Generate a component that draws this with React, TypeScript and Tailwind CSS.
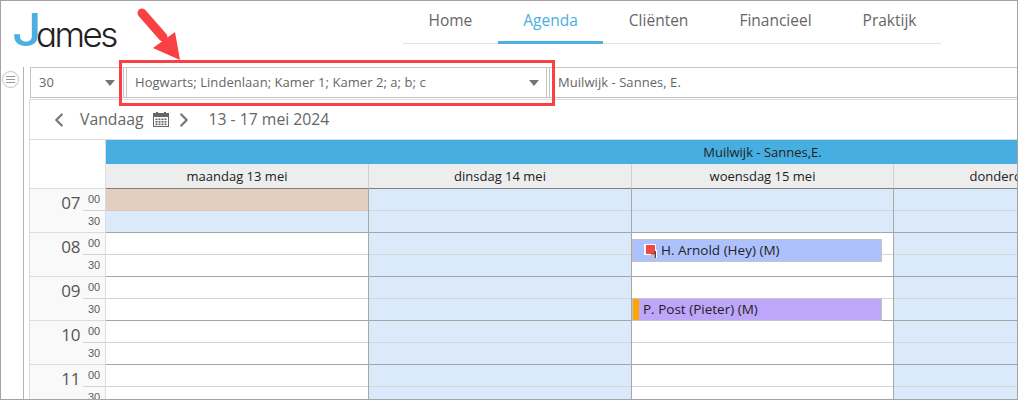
import { ChevronLeft, ChevronRight } from "lucide-react"

const navItems = ["Home", "Agenda", "Cliënten", "Financieel", "Praktijk"]

const blueDay = Array(10).fill("blue")

const days = [
  { label: "maandag 13 mei", width: "w-[263px]", slots: ["tan", "blue", "", "", "", "", "", "", "", ""] },
  { label: "dinsdag 14 mei", width: "w-[263px]", slots: blueDay },
  { label: "woensdag 15 mei", width: "w-[262px]", slots: ["blue", "blue", "", "", "", "", "", "", "", ""] },
  { label: "donderdag 16 mei", width: "w-[263px]", slots: blueDay },
]

const hours = ["07", "08", "09", "10", "11"]

function CalendarIcon() {
  return (
    <svg width="16" height="15" viewBox="0 0 16 15" className="ml-[9px] shrink-0">
      <rect x="0.5" y="1.5" width="15" height="13" fill="#fff" stroke="#666" />
      <rect x="1" y="2" width="14" height="3" fill="#666" />
      <rect x="3" y="0" width="2" height="3" fill="#666" />
      <rect x="11" y="0" width="2" height="3" fill="#666" />
      {[2.5, 5.5, 8.5, 11.5].map((x) =>
        [6.5, 9, 11.5].map((y) => <rect key={`${x}-${y}`} x={x} y={y} width="2" height="1.6" fill="#666" />)
      )}
    </svg>
  )
}

function Caret() {
  return <span className="ml-auto w-0 h-0 border-x-[5px] border-x-transparent border-t-[6px] border-t-[#757575]" />
}

function Flag() {
  return (
    <svg width="13" height="14" viewBox="0 0 13 14" className="shrink-0">
      <rect x="0" y="0" width="12" height="11" fill="#fff" />
      <rect x="10" y="6" width="3" height="8" fill="#fff" />
      <rect x="2" y="1" width="9" height="9" fill="#f0484a" />
      <rect x="10.5" y="7" width="1.5" height="7" fill="#7a3b2a" />
      <rect x="7" y="9.5" width="4" height="1" fill="#7a3b2a" />
    </svg>
  )
}

export default function App() {
  return (
    <div className="relative w-[1018px] h-[400px] overflow-hidden bg-white border border-[#a3a3a3] flex flex-col text-[#666] font-['Open_Sans',sans-serif]">
      <header className="h-[66px] shrink-0 flex">
        <div className="w-[402px] shrink-0 pl-[15px] pt-[6px] flex items-start leading-none">
          <span className="text-[#4bb0e0] text-[45px] font-['Inter',sans-serif] font-medium leading-[45px] scale-x-[1.15] origin-right">J</span>
          <span className="text-[#222] text-[35px] font-['Inter',sans-serif] font-light tracking-[-2.5px] leading-[35px] mt-[10px] -ml-[6px] [font-feature-settings:'cv11']">ames</span>
        </div>
        <nav className="w-[538px] h-[43px] flex border-b border-[#e3e3e3]">
          {navItems.map((item) => (
            <div
              key={item}
              className={
                item === "Agenda"
                  ? "h-[43px] px-[25.5px] pt-[8px] text-[15.5px] text-[#4bafdf] border-b-[3px] border-[#4bafdf]"
                  : "h-[43px] px-[25.5px] pt-[8px] text-[15.5px]"
              }
            >
              {item}
            </div>
          ))}
        </nav>
      </header>

      <div className="flex-1 flex min-h-0">
        <aside className="w-[23px] shrink-0 border-r border-[#b4b4b4] pt-[4px] pl-[1px]">
          <div className="w-[17px] h-[17px] rounded-full border border-[#c4c4c4] flex flex-col items-center justify-center gap-[2px]">
            <span className="w-[9px] h-px bg-[#999]" />
            <span className="w-[9px] h-px bg-[#999]" />
            <span className="w-[9px] h-px bg-[#999]" />
          </div>
        </aside>

        <main className="flex-1 min-w-0 pl-[5px]">
          <div className="h-[31px] ml-[1px] flex text-[13px] tracking-[0.05px] border-y border-[#c4c4c4]">
            <div className="w-[94px] shrink-0 border-x border-[#c4c4c4] flex items-center pl-[8px] pr-[8px]">
              30
              <Caret />
            </div>
            <div className="w-[421px] shrink-0 ml-[2px] border-x border-[#c4c4c4] flex items-center pl-[8px] pr-[7px]">
              Hogwarts; Lindenlaan; Kamer 1; Kamer 2; a; b; c
              <Caret />
            </div>
            <div className="flex-1 ml-[2px] border-l border-[#c4c4c4] flex items-center pl-[8px]">Muilwijk - Sannes, E.</div>
          </div>

          <div className="mt-[1px] border-l border-t border-[#dcdcdc]">
            <div className="h-[39px] flex items-center pl-[18px] text-[15.75px]">
              <ChevronLeft size={22} strokeWidth={2.5} className="text-[#777] shrink-0" />
              <span className="ml-[10px]">Vandaag</span>
              <CalendarIcon />
              <ChevronRight size={22} strokeWidth={2.5} className="text-[#777] ml-[4px] shrink-0" />
              <span className="ml-[14px]">13 - 17 mei 2024</span>
            </div>

            <div className="flex border-t border-[#dcdcdc]">
              <div className="w-[76px] shrink-0 border-r border-[#dcdcdc]">
                <div className="h-[49px] border-b border-[#dcdcdc]" />
                {hours.map((h) => (
                  <div key={h} className="h-[44px] flex bg-[#f9f9f9] border-b border-[#dcdcdc]">
                    <div className="w-[53px] text-right pr-[3px] pt-[2px] text-[17px] tracking-[-0.4px] leading-[24px] text-[#555]">{h}</div>
                    <div className="flex-1 text-[11px] text-[#5f5a55] font-['Liberation_Sans',sans-serif]">
                      <div className="h-[22px] border-b border-[#d4d4d4] pl-[5px] pt-[3px] leading-[14px]">00</div>
                      <div className="h-[21px] pl-[5px] pt-[3px] leading-[14px]">30</div>
                    </div>
                  </div>
                ))}
              </div>

              <div className="flex-1 min-w-0 flex flex-col">
                <div className="h-[24px] w-[1313px] shrink-0 bg-[#46aee0] text-[#222] text-[13px] leading-[24px] text-center">
                  Muilwijk - Sannes,E.
                </div>
                <div className="flex w-[1313px]">
                  {days.map((day, i) => (
                    <div key={day.label} className={`${day.width} shrink-0 relative border-r border-[#a8a8a8]`}>
                      <div className="h-[25px] bg-[#ededed] border-b border-[#7f7f7f] text-[#222] text-[13px] leading-[24px] text-center -mr-px border-r border-r-[#d0d0d0]">
                        {day.label}
                      </div>
                      {day.slots.map((slot, s) => (
                        <div
                          key={s}
                          className={[
                            "h-[22px]",
                            s % 2 === 1 ? "border-b border-[#a5a5a5]" : "border-b border-[#d4d4d4]",
                            slot === "tan" ? "bg-[#e2cfc0] border-[#e3c4ad]" : slot === "blue" ? "bg-[#dbeafa]" : "bg-white",
                          ].join(" ")}
                        />
                      ))}
                      {i === 2 && (
                        <>
                          <div className="absolute left-0 top-[75px] w-[250px] h-[23px] bg-[#adc2fc] border border-[#c4c4c4] flex items-center pl-[11px] gap-[4px] text-[13.5px] text-[#222]">
                            <Flag />
                            H. Arnold (Hey) (M)
                          </div>
                          <div className="absolute left-0 top-[134px] w-[250px] h-[23px] bg-[#bea6fb] border border-[#c4c4c4] flex items-center text-[13.5px] text-[#222]">
                            <span className="w-[6px] h-full bg-[#ffa500] mr-[4px]" />
                            P. Post (Pieter) (M)
                          </div>
                        </>
                      )}
                    </div>
                  ))}
                </div>
              </div>
            </div>
          </div>
        </main>
      </div>

      {/* annotation over the screenshot */}
      <div className="absolute left-[118px] top-[59px] w-[436px] h-[46px] border-[3px] border-[#f94144]" />
      <svg className="absolute left-[134px] top-[6px]" width="50" height="56" viewBox="0 0 50 56">
        <path d="M7 6 L28 30" stroke="#f94144" strokeWidth="9" strokeLinecap="round" fill="none" />
        <path d="M40 25 L45 53 L18 41 Z" fill="#f94144" />
      </svg>
    </div>
  )
}
